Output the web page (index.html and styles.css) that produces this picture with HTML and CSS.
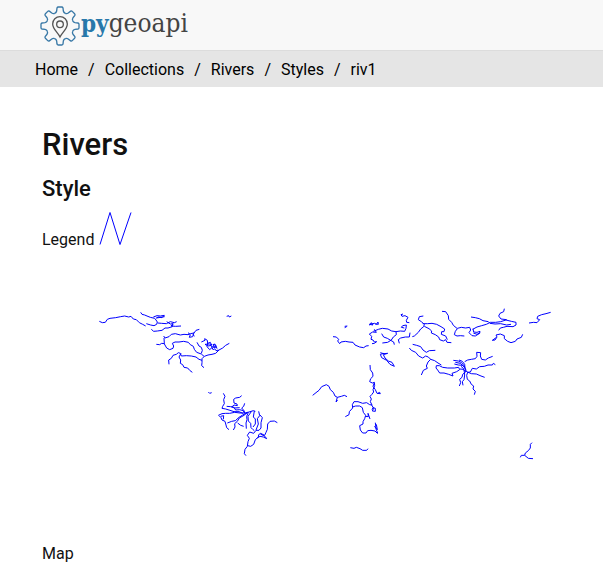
FILE: index.html
```html
<!DOCTYPE html>
<html lang="en">
<head>
<meta charset="utf-8">
<meta name="viewport" content="width=device-width, initial-scale=1">
<title>Rivers - pygeoapi</title>
<link rel="stylesheet" href="styles.css">
</head>
<body>
<header class="site-header">
  <a class="brand" href="#">
    <svg class="brand-mark" viewBox="0 0 120 120" aria-hidden="true">
      <defs><path id="tooth" d="M-16-38Q-11-40-10-45L-9-54Q-8-57-5-57H5Q8-57 9-54L10-45Q11-40 16-38"/></defs>
      <g class="gear" transform="translate(60 60)">
        <use href="#tooth"/><use href="#tooth" transform="rotate(45)"/><use href="#tooth" transform="rotate(90)"/><use href="#tooth" transform="rotate(135)"/><use href="#tooth" transform="rotate(180)"/><use href="#tooth" transform="rotate(225)"/><use href="#tooth" transform="rotate(270)"/><use href="#tooth" transform="rotate(315)"/>
      </g>
      <g class="pin"><path d="M60 93C53 79 38 69 38 54A22 22 0 0 1 82 54C82 69 67 79 60 93Z"/><circle cx="60" cy="55" r="10"/></g>
    </svg>
    <span class="brand-name"><span class="brand-py">py</span>geoapi</span>
  </a>
</header>
<nav class="crumbs" aria-label="Breadcrumb">
  <a href="#">Home</a><span>/</span><a href="#">Collections</a><span>/</span><a href="#">Rivers</a><span>/</span><a href="#">Styles</a><span>/</span><a href="#">riv1</a>
</nav>
<main class="content">
  <h1>Rivers</h1>
  <h2>Style</h2>
  <div class="legend">Legend
    <svg class="legend-line" viewBox="0 0 32 32" role="img" aria-label="River line"><path d="M0 32L10 0L20 32L31 0"/></svg>
  </div>
  <svg class="map" viewBox="126 768 1557 855" role="img" aria-label="Map of rivers">
    <g transform="translate(270 900)">
      <path d="M28 64L37 68L46 67L52 58L60 55L77 53L92 50L104 48L116 51L123 49L130 57L139 59L148 68L158 73L167 78"/>
      <path d="M152 37L156 43L164 45L171 48L181 52L194 55L198 60L202 66L200 73L192 77L182 75L169 71"/>
      <path d="M190 51L201 47L211 48L223 46L216 53L205 51L199 54L212 52L224 50"/>
      <path d="M203 69L215 70L229 71L241 65L253 68L260 65M230 65L241 72L249 71L243 78L257 79L273 78M249 71L247 80L234 84L225 84L216 91L202 93L191 94L184 88"/>
      <path d="M328 88L318 91L312 99L301 101L294 104L282 103L271 105L256 101L244 103L237 110L225 114L221 108M312 98L308 110L298 112L301 104L294 98M309 103L313 109M222 114L223 131L215 130L209 134L199 133M222 130L230 144L239 149L249 145L251 138L247 130L255 126L267 126L281 124L295 127L301 134L310 139L313 148L320 157L334 162L342 169"/>
      <path d="M321 127L327 138L334 142L337 151L334 160M418 130L407 136L398 144L387 150L377 160L366 163L354 165L343 169L336 176L336 188L335 197L342 203M386 150L378 152L374 146L370 150L364 139L374 143L369 133L377 135L381 146M334 126L345 121L344 116L352 121L353 130L361 127L365 136L354 138L345 133L358 132L366 134M353 129L351 140L359 149L367 142M374 131L378 142L370 140"/>
      <path d="M237 193L236 180L244 175L249 166L259 163L265 158L271 160L274 168L289 167L304 168L318 171L327 178L336 181M273 160L267 171L272 180L271 190L278 194L282 202L293 204L299 211L307 217"/>
      <path d="M410 49L416 47L418 51L424 48"/>
    </g>
    <g transform="translate(600 1140)">
      <path d="M25 36L29 40L35 38M70 40L75 49L71 59L73 71L68 79L66 85L77 87L90 91L102 95L117 95L129 100M80 79L92 80L101 81L107 90L119 89L130 92L133 99M125 47L119 52L107 54L101 58L102 69L111 72L112 77L102 75L95 81L104 84L119 83M134 70L131 79L125 84L132 92L134 100M55 106L66 101L77 100L89 100L104 97L120 99L134 99L147 96L160 92L166 94M57 107L63 113L66 120L75 124L78 135L80 143L87 149M62 109L71 107L70 118M82 129L95 124L106 122L117 112L128 105L142 98M100 150L105 141L104 131L112 124L118 114L132 106L143 97M113 129L122 136L131 139M145 97L140 109L141 119L138 129L139 146M154 95L144 109L145 123L152 130L153 143L158 148L163 152M163 93L160 111L166 117L166 132L159 141M176 94L179 107L172 116L175 132L168 150M180 105L187 113L183 128L183 144L177 151L168 151L161 160L149 156L142 166L148 175L144 185L142 199L135 208L133 221L138 227"/>
      <path d="M232 128L223 123L210 124L203 132L202 148L198 157L194 166L182 160L176 164L175 171L166 179L161 193L152 199L143 197M181 162L195 169L200 176L190 171L180 169L172 174"/>
    </g>
    <g transform="translate(900 900)">
      <path d="M99 110L109 111L116 118L113 123L119 131L123 126L136 124L147 126L159 127L165 135L179 141L191 143L198 138L206 137M134 83L140 80M209 76L214 68L219 75L208 73L224 70L229 73L234 66L235 73L226 72M223 88L229 97L218 96L208 102L215 109L213 118L219 120L223 126L230 125L223 130L216 131M220 94L235 88L247 85L264 87L275 93L288 95L301 93L314 94L318 85L319 75L308 77L304 82L313 84M328 68L320 67L319 61L324 52L315 47L306 49L303 44L309 42M288 95L289 104L280 111L274 120L263 127L247 129M245 101L251 111L262 115L272 121L281 126L283 134M330 98L328 111L316 111L302 114L295 119L298 130"/>
      <path d="M241 158L251 161L263 160L250 164L255 174L265 183L276 187L283 199L270 193L260 181L245 173L241 163L252 160"/>
    </g>
    <g transform="translate(1200 900)">
      <path d="M70 48L58 50L55 59L64 65L73 73L71 80L62 87L55 97L43 108L37 110M68 71L83 71L96 70L110 73L123 80L134 87L132 95L125 95L124 103L137 108L142 119M73 79L87 86L95 93L94 99L106 104L116 111L119 119L130 123L137 119L141 127L154 128"/>
      <path d="M126 34L137 35L145 47L146 58L155 67L160 76L172 86L166 94L163 104L171 108L181 107L193 108M172 85L184 82L197 84L209 82L212 90L207 98L216 107L226 108L239 100L240 94L231 97L221 96L219 86M218 88L231 81L245 77L259 73L271 67L287 67L302 65L318 60L334 64L348 67L348 75L339 80L321 79L310 82L301 84L296 91M213 51L226 53L238 56L249 62L265 65L270 70L285 72L302 71L320 75L333 73M220 99L231 103L240 98M313 26L311 35L300 40L296 48L303 57L320 59"/>
      <path d="M288 113L277 121L285 120L291 111L288 105L301 102L313 107L313 116L323 124L333 128L346 124L351 117L364 112L368 103M387 69L401 67L411 68L419 59L411 56L413 49L425 44L438 41L452 37"/>
      <path d="M28 144L34 151L47 157L56 168L68 174L77 168L85 171L92 178L104 182L114 189L124 195M38 133L50 136L62 140L69 150L79 157L88 152L106 151M92 178L84 186L79 198L82 205L70 211L64 225M109 197L118 197L128 202L143 204L163 204L176 202L179 209L170 215L156 220L159 228L146 223L132 219L119 219L113 210L108 204Z"/>
      <path d="M160 181L175 183L185 188L193 198L197 212L203 217L200 226L202 238L209 243L214 253L221 258L219 267L226 274L223 284M163 192L175 195L188 196L197 207L198 216M166 187L181 190L190 199M177 180L187 184L194 193L195 205M180 207L190 208L197 216L188 223L186 232L179 238L182 248L178 258M183 199L191 206L193 216L194 225L192 239L187 245L189 256M194 185L203 180L214 178L226 176L231 169L230 157L242 158L241 168L245 178L256 180L265 174L278 169M202 217L211 216L217 205L229 207L239 200L253 199L264 195L277 195L280 190L286 194M202 216L214 221L229 222L243 228L254 232"/>
    </g>
    <g transform="translate(900 1050)">
      <path d="M210 45L211 59L218 69L219 79L212 86L209 95L217 99L223 97L224 107L219 119L221 126L215 134L210 139L214 147L211 155L216 165L209 164L200 158L188 160L174 155L162 155L157 164L158 174L148 185L147 194L136 200M223 98L219 109L226 119L231 130L241 131L239 127L233 130M215 165L221 175L217 183L226 184L226 175L219 173L216 179M157 171L167 168L179 168L187 173L190 187L197 196L194 206L189 215L189 222L179 227L181 240L188 249L198 249L203 242L213 241L225 243L233 251M196 199L205 200L204 190L210 207M226 218L228 237L233 249M223 229L232 239L229 223"/>
      <path d="M38 136L48 128L57 121L65 110L79 104L87 109L91 119L100 127L105 138L112 142L124 139L133 136L141 140M112 142L108 156L113 151M151 293L162 295L169 292L180 296L188 301L200 301L204 296"/>
    </g>
    <g transform="translate(1530 1290)"><path d="M66 38L61 43L61 54L55 62L46 69L44 76L34 76L31 82M44 76L55 85L69 86"/></g>
    <path d="M1034 979L1042 978"/>
  </svg>
  <div class="map-label">Map</div>
</main>
</body>
</html>
```
FILE: styles.css
```css
* { box-sizing: border-box; }
body {
  margin: 0;
  background: #fff;
  color: #111;
  font: 16px/24px Roboto, "Liberation Sans", sans-serif;
}
a { color: inherit; text-decoration: none; }
.site-header {
  height: 51px;
  padding: 6px 40px;
  background: #f8f8f8;
  border-bottom: 1px solid #dcdcdc;
}
.brand { display: flex; width: max-content; }
.brand-mark { width: 40px; height: 40px; fill: none; stroke-width: 4; }
.gear { stroke: #3878a6; }
.pin { stroke: #555; }
.brand-name {
  padding-left: 1px;
  color: #444;
  font: 26px/34px "DejaVu Serif Condensed", "DejaVu Serif", serif;
}
.brand-py { color: #2878aa; font-weight: bold; font-size: 24px; }
.crumbs {
  display: flex;
  flex-wrap: wrap;
  gap: 0 10px;
  padding: 7px 35px 5px;
  background: #e5e5e5;
  color: #000;
}
.content { padding: 38px 42px 0; }
h1, h2 { margin: 0; font-weight: 500; }
h1 { font-size: 31px; line-height: 40px; }
h2 { margin-top: 10px; font-size: 22px; line-height: 28px; }
.legend { margin-top: 9px; }
.legend-line { width: 32px; height: 33px; margin-left: 2px; overflow: visible; }
.legend-line, .map { fill: none; stroke: #00f; stroke-width: 1; }
.map { display: block; width: 100%; margin-top: 4px; stroke-width: 3; stroke-linejoin: round; }
.map-label { padding-top: 1px; }
```
